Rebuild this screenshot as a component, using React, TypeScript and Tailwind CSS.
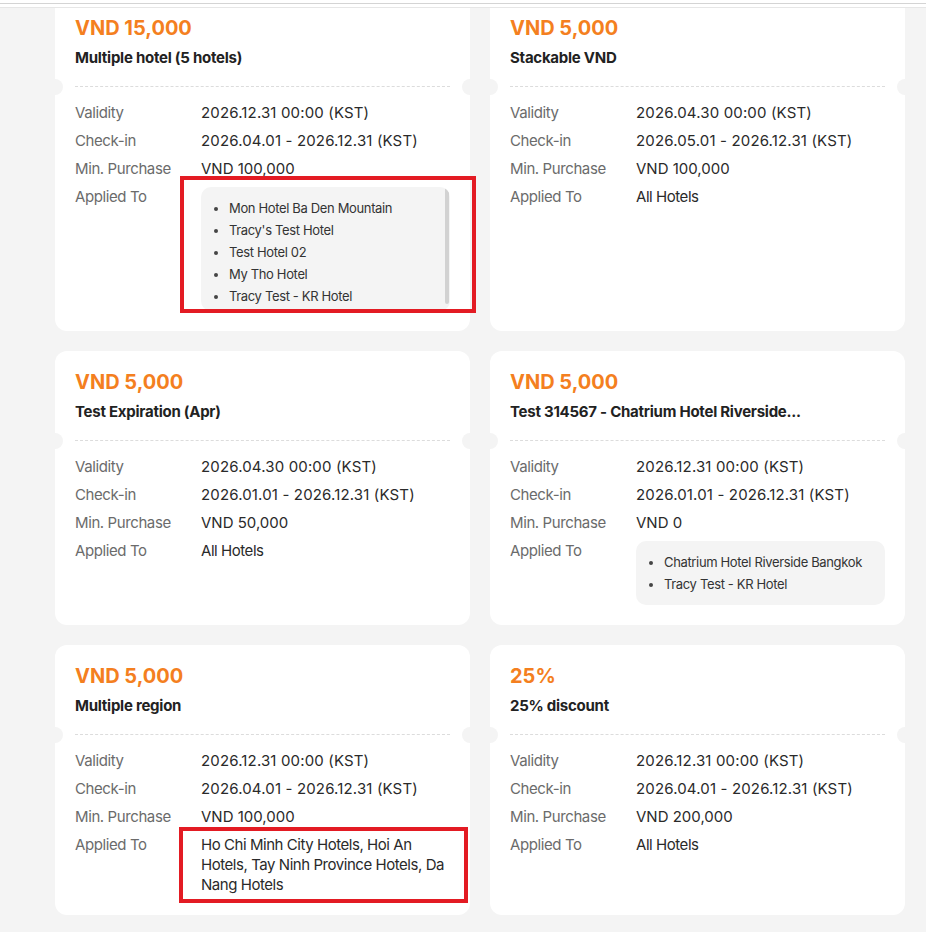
import React from "react";

type Coupon = {
  amount: string;
  title: string;
  validity: string;
  checkin: string;
  minPurchase: string;
  applied: string | string[];
  scroll?: boolean;
};

const coupons: Coupon[] = [
  {
    amount: "VND 15,000",
    title: "Multiple hotel (5 hotels)",
    validity: "2026.12.31 00:00 (KST)",
    checkin: "2026.04.01 - 2026.12.31 (KST)",
    minPurchase: "VND 100,000",
    applied: ["Mon Hotel Ba Den Mountain", "Tracy's Test Hotel", "Test Hotel 02", "My Tho Hotel", "Tracy Test - KR Hotel"],
    scroll: true,
  },
  {
    amount: "VND 5,000",
    title: "Stackable VND",
    validity: "2026.04.30 00:00 (KST)",
    checkin: "2026.05.01 - 2026.12.31 (KST)",
    minPurchase: "VND 100,000",
    applied: "All Hotels",
  },
  {
    amount: "VND 5,000",
    title: "Test Expiration (Apr)",
    validity: "2026.04.30 00:00 (KST)",
    checkin: "2026.01.01 - 2026.12.31 (KST)",
    minPurchase: "VND 50,000",
    applied: "All Hotels",
  },
  {
    amount: "VND 5,000",
    title: "Test 314567 - Chatrium Hotel Riverside...",
    validity: "2026.12.31 00:00 (KST)",
    checkin: "2026.01.01 - 2026.12.31 (KST)",
    minPurchase: "VND 0",
    applied: ["Chatrium Hotel Riverside Bangkok", "Tracy Test - KR Hotel"],
  },
  {
    amount: "VND 5,000",
    title: "Multiple region",
    validity: "2026.12.31 00:00 (KST)",
    checkin: "2026.04.01 - 2026.12.31 (KST)",
    minPurchase: "VND 100,000",
    applied: "Ho Chi Minh City Hotels, Hoi An Hotels, Tay Ninh Province Hotels, Da Nang Hotels",
  },
  {
    amount: "25%",
    title: "25% discount",
    validity: "2026.12.31 00:00 (KST)",
    checkin: "2026.04.01 - 2026.12.31 (KST)",
    minPurchase: "VND 200,000",
    applied: "All Hotels",
  },
];

function Card({ c }: { c: Coupon }) {
  const label = "text-[#6b6b6b] tracking-[-0.4px]";
  const value = "text-[#2a2a2a] tracking-[0.15px]";
  return (
    <div className="relative rounded-[12px] bg-white px-5 pt-5 pb-5">
      <div className="text-[20px] leading-[22px] font-bold text-[#f47f20]">{c.amount}</div>
      <div className="mt-[9px] truncate text-[15px] leading-5 font-bold tracking-[-0.25px] text-[#222222]">{c.title}</div>
      <div className="relative mt-[18px] mb-[16px] border-t border-dashed border-[#dcdcdc]">
        <span className="absolute -left-[28px] -top-[8.5px] h-4 w-4 rounded-full bg-[#f4f4f4]" />
        <span className="absolute -right-[28px] -top-[8.5px] h-4 w-4 rounded-full bg-[#f4f4f4]" />
      </div>
      <div className="grid grid-cols-[126px_1fr] gap-y-2 text-[15px] leading-5">
        <div className={label}>Validity</div>
        <div className={value}>{c.validity}</div>
        <div className={label}>Check-in</div>
        <div className={value}>{c.checkin}</div>
        <div className={label}>Min. Purchase</div>
        <div className="text-[#2a2a2a]">{c.minPurchase}</div>
        <div className={label}>Applied To</div>
        {Array.isArray(c.applied) ? (
          <div
            className={
              c.scroll
                ? "relative max-h-[124px] overflow-hidden rounded-[10px] bg-[#f4f4f4]"
                : "relative rounded-[10px] bg-[#f4f4f4]"
            }
          >
            <ul className="list-disc py-[10px] pr-[10px] pl-[28px] text-[13px] leading-[22px] tracking-[-0.35px] text-[#333333] marker:text-[#444444]">
              {c.applied.map((h) => (
                <li key={h}>{h}</li>
              ))}
            </ul>
            {c.scroll && (
              <span className="absolute top-0 right-[1px] h-[117px] w-[4px] rounded-full bg-[#d2d2d2]" />
            )}
          </div>
        ) : (
          <div className="text-[#2a2a2a] tracking-[-0.45px]">{c.applied}</div>
        )}
      </div>
    </div>
  );
}

export default function App() {
  return (
    <div className="relative min-h-screen overflow-hidden bg-[#f4f4f4] [font-family:Inter,'Noto_Sans',sans-serif]">
      <div className="relative z-10 bg-white">
        <div className="h-[3px]" />
        <div className="h-px bg-[#d4d4d4]" />
        <div className="h-[3px]" />
        <div className="h-px bg-[#e6e6e6]" />
      </div>
      <div className="-mt-[11px] grid grid-cols-[415px_415px] gap-5 pl-[55px]">
        {coupons.map((c, i) => (
          <Card key={i} c={c} />
        ))}
      </div>
      <div className="pointer-events-none absolute top-[176px] left-[180px] z-20 h-[137px] w-[296px] border-[4px] border-[#e31b23]" />
      <div className="pointer-events-none absolute top-[827px] left-[179px] z-20 h-[76px] w-[289px] border-[4px] border-[#e31b23]" />
    </div>
  );
}
